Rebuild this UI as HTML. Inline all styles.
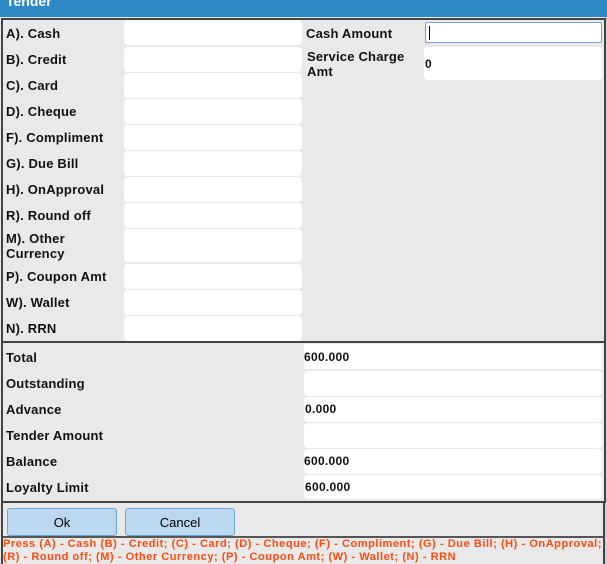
<!DOCTYPE html><html><head><style>
body{margin:0;width:607px;height:564px;background:#fff;font-family:"Liberation Sans",Arial,sans-serif;position:relative;overflow:hidden}
.a{position:absolute}
.t{background:#2f88c6;left:0;top:0;width:607px;height:17px;color:#fff;font-weight:bold;font-size:14px;line-height:2px;padding-left:6px;box-sizing:border-box}
.lab{font-size:13px;font-weight:bold;color:#111;left:6px;letter-spacing:0.2px}
.in{background:#fff;border-radius:4px}
.v{font-size:12px;font-weight:bold;color:#111;letter-spacing:0.3px}
</style></head><body>
<div class="a t">Tender</div>
<div class="a" style="left:603px;top:17px;width:4px;height:547px;background:#d0d0d0"></div>
<div class="a" style="left:0;top:17px;width:605px;height:547px;background:#e9e9e9"></div>
<div class="a" style="left:1px;top:18px;width:601px;height:323px;border:2px solid #444;border-bottom:none"></div>
<div class="a" style="left:1px;top:341px;width:601px;height:158px;border:2px solid #444"></div>
<div class="a" style="left:1px;top:501px;width:2px;height:63px;background:#444"></div>
<div class="a" style="left:603px;top:501px;width:2px;height:63px;background:#444"></div>
<div class="a" style="left:3px;top:536px;width:600px;height:2px;background:#555"></div>

<div class="a lab" style="top:26px">A). Cash</div><div class="a in" style="left:124px;top:20px;width:178px;height:25px"></div>
<div class="a lab" style="top:52px">B). Credit</div><div class="a in" style="left:124px;top:47px;width:178px;height:25px"></div>
<div class="a lab" style="top:78px">C). Card</div><div class="a in" style="left:124px;top:73px;width:178px;height:25px"></div>
<div class="a lab" style="top:104px">D). Cheque</div><div class="a in" style="left:124px;top:99px;width:178px;height:25px"></div>
<div class="a lab" style="top:130px">F). Compliment</div><div class="a in" style="left:124px;top:125px;width:178px;height:25px"></div>
<div class="a lab" style="top:156px">G). Due Bill</div><div class="a in" style="left:124px;top:151px;width:178px;height:25px"></div>
<div class="a lab" style="top:182px">H). OnApproval</div><div class="a in" style="left:124px;top:177px;width:178px;height:25px"></div>
<div class="a lab" style="top:208px">R). Round off</div><div class="a in" style="left:124px;top:203px;width:178px;height:25px"></div>
<div class="a lab" style="top:231px;line-height:15px">M). Other<br>Currency</div><div class="a in" style="left:124px;top:229px;width:178px;height:33px"></div>
<div class="a lab" style="top:269px">P). Coupon Amt</div><div class="a in" style="left:124px;top:264px;width:178px;height:25px"></div>
<div class="a lab" style="top:295px">W). Wallet</div><div class="a in" style="left:124px;top:290px;width:178px;height:25px"></div>
<div class="a lab" style="top:321px">N). RRN</div><div class="a in" style="left:124px;top:316px;width:178px;height:25px"></div>

<div class="a lab" style="left:306px;top:26px">Cash Amount</div>
<div class="a" style="left:425px;top:22px;width:175px;height:19px;background:#fff;border:1px solid #7a9fd8;border-radius:2px"><div class="a" style="left:3px;top:3px;width:1px;height:14px;background:#000"></div></div>
<div class="a lab" style="left:307px;top:49px;line-height:15px">Service Charge<br>Amt</div>
<div class="a in" style="left:424px;top:47px;width:178px;height:33px"><span class="a v" style="left:1px;top:10px">0</span></div>

<div class="a lab" style="top:350px">Total</div><div class="a in" style="left:304px;top:344px;width:298px;height:25px;border-radius:0"><span class="a v" style="left:0;top:6px">600.000</span></div>
<div class="a lab" style="top:376px">Outstanding</div><div class="a in" style="left:304px;top:371px;width:298px;height:25px"></div>
<div class="a lab" style="top:402px">Advance</div><div class="a in" style="left:304px;top:397px;width:298px;height:25px"><span class="a v" style="left:1px;top:5px">0.000</span></div>
<div class="a lab" style="top:428px">Tender Amount</div><div class="a in" style="left:304px;top:423px;width:298px;height:25px"></div>
<div class="a lab" style="top:454px">Balance</div><div class="a in" style="left:304px;top:449px;width:298px;height:25px"><span class="a v" style="left:0;top:5px">600.000</span></div>
<div class="a lab" style="top:480px">Loyalty Limit</div><div class="a in" style="left:304px;top:475px;width:298px;height:24px"><span class="a v" style="left:1px;top:5px">600.000</span></div>

<div class="a" style="left:7px;top:508px;width:108px;height:26px;background:#bcd8f0;border:1px solid #6aa6dc;border-radius:3px;text-align:center;line-height:27px;font-size:13px">Ok</div>
<div class="a" style="left:125px;top:508px;width:108px;height:26px;background:#bcd8f0;border:1px solid #6aa6dc;border-radius:3px;text-align:center;line-height:27px;font-size:13px">Cancel</div>

<div class="a" style="left:3px;top:538px;width:600px;font-size:11px;font-weight:bold;color:#ff4a10;line-height:13px;letter-spacing:0.55px;white-space:nowrap">Press (A) - Cash (B) - Credit; (C) - Card; (D) - Cheque; (F) - Compliment; (G) - Due Bill; (H) - OnApproval;<br>(R) - Round off; (M) - Other Currency; (P) - Coupon Amt; (W) - Wallet; (N) - RRN</div>
</body></html>
